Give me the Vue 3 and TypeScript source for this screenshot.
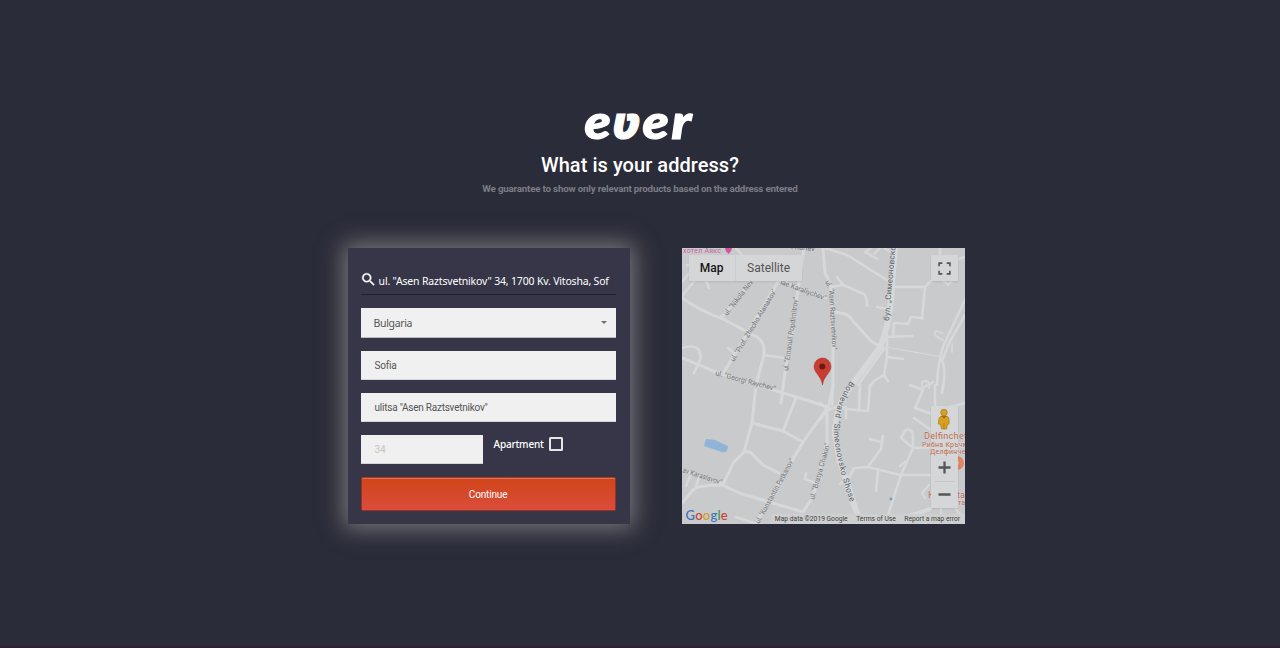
<script setup lang="ts">
import { ref } from 'vue'

const search = ref('ul. "Asen Raztsvetnikov" 34, 1700 Kv. Vitosha, Sof')
const country = ref('Bulgaria')
const city = ref('Sofia')
const street = ref('ulitsa "Asen Raztsvetnikov"')
const house = ref('34')

interface Road { d: string; w: number }
const roads: Road[] = [
  { d: 'M682 298Q700 311 723 319L757 337Q764 342 764 350V355L756 385 752 423 744 452 733 463 723 485', w: 3 },
  { d: 'M764 355L784 358M728 348L734 353M721 318L751 282M736 248L742 255', w: 2.6 },
  { d: 'M682 358L716 372 756 385 790 395 828 407', w: 3 },
  { d: 'M682 348Q692 345 697 348Q702 353 700 360L694 373', w: 2.6 },
  { d: 'M724 372L778 282M781 403L785 372 798 290 804 248', w: 3 },
  { d: 'M779 280L826 298M682 296L699 275M706 280L709 288M682 282L690 272M687 265L693 267', w: 2.6 },
  { d: 'M823 248L825 273Q831 283 831 292L833 347V385L828 410', w: 3 },
  { d: 'M825 248L847 255 890 282', w: 2.6 },
  { d: 'M837 277L843 285 864 294Q867 296 867 306M831 287L843 285', w: 2.6 },
  { d: 'M835 312L845 314Q849 315 853 321L872 342 882 347', w: 3 },
  { d: 'M894 287H925L936 276M940 248V262M965 257L955 260M925 287L922 319', w: 2.6 },
  { d: 'M922 318L911 317 908 324 894 323 893 337M885 337L912 336M877 307L888 309', w: 2.6 },
  { d: 'M887 335V357L884 375 888 381M887 357L903 359M884 375L874 381 870 386M884 349L858 385', w: 2.6 },
  { d: 'M880 346L942 357', w: 1.2 },
  { d: 'M965 300L947 338Q938 355 937 385M965 315L949 343 942 361Q946 366 943 389', w: 2.6 },
  { d: 'M943 340L936 336Q933 335 936 331L943 333M952 344V352M922 386Q920 381 926 381Q931 382 929 388', w: 1.8 },
  { d: 'M871 248L865 252 877 259M874 254L880 248M884 248L891 252M940 278L948 285 953 280', w: 2.2 },
  { d: 'M752 423L783 431 803 442M796 398L783 431', w: 3 },
  { d: 'M828 407L803 442 756 523', w: 3 },
  { d: 'M744 452H750L763 465 779 473', w: 3 },
  { d: 'M682 503L693 490Q698 485 723 485L739 493 803 512 813 497 827 443V408', w: 3 },
  { d: 'M682 470L721 483M686 486L690 476M696 486L699 478M736 517L754 523M806 473L805 479 815 483', w: 2.6 },
  { d: 'M820 403L828 410 820 420M828 410L838 406 846 409 868 411 870 385M846 407V418M860 385L859 410M833 385L832 405', w: 2.6 },
  { d: 'M910 385L923 390 915 408 935 415M935 385V415M914 418L935 433M943 385L942 393M950 407L965 403M921 389L933 382', w: 2.6 },
  { d: 'M901 438L905 431Q910 427 913 434V448L901 475 887 518M901 438L913 448 965 446', w: 2.6 },
  { d: 'M868 467L881 449 883 436M870 439L881 442M868 467L900 475H935M868 467L854 468 849 478 840 484M878 472L876 491M900 466L905 462', w: 2.6 },
  { d: 'M925 498L922 493 929 485M941 508V520M955 508L963 518', w: 2.2 },
  { d: 'M900 519L930 509', w: 4 },
  { d: 'M895 248L892 283Q891 322 880 347L852 385Q835 405 835 435L840 462 853 502 861 524', w: 6 },
]

interface Label { t: string; x: number; y: number; a: number; l: number }
const streets: Label[] = [
  { t: 'ul. "Nikola Nev', x: 727, y: 316, a: -52, l: 43 },
  { t: 'ul. "Prof. Zhecho Atanasov"', x: 734, y: 362, a: -59, l: 83 },
  { t: 'ul. "Emanuil Popdimitrov"', x: 788, y: 371, a: -82, l: 74 },
  { t: 'lae Karaliychev"', x: 780, y: 284, a: 20, l: 48 },
  { t: 'ul. "Georgi Raychev"', x: 715, y: 375, a: 15, l: 62 },
  { t: 'ul.', x: 825, y: 282, a: 60, l: 7 },
  { t: '"Asen Raztsvetnikov"', x: 829, y: 289, a: 87, l: 61 },
  { t: 'ul. "Konstantin Petkanov"', x: 759, y: 524, a: -61, l: 73 },
  { t: 'ul. "Bratya Chakin"', x: 814, y: 500, a: -74, l: 58 },
  { t: 'av Karaslavov"', x: 682, y: 472, a: 18, l: 41 },
  { t: 'i Kunev"', x: 791, y: 249, a: 5, l: 26 },
]

const google = [
  { c: 'G', k: 'blue' }, { c: 'o', k: 'red' }, { c: 'o', k: 'yellow' },
  { c: 'g', k: 'blue' }, { c: 'l', k: 'green' }, { c: 'e', k: 'red' },
]
</script>

<template>
  <main class="page">
    <header class="intro">
      <svg class="logo" viewBox="0 0 114 44" role="img" aria-label="ever">
        <text transform="translate(1.500 33.500) scale(1.140 1)">e</text>
        <text class="vee" transform="translate(29 33.500) scale(.96 1)">ʋ</text>
        <text transform="translate(59.500 33.500) scale(1.140 1)">e</text>
        <text transform="translate(88.500 33.500) scale(1.180 1)">r</text>
      </svg>
      <h1>What is your address?</h1>
      <p>We guarantee to show only relevant products based on the address entered</p>
    </header>

    <div class="content">
      <form class="card" @submit.prevent>
        <label class="search">
          <svg viewBox="0 0 24 24"><path d="M15.5 14h-.79l-.28-.27A6.47 6.47 0 0 0 16 9.5 6.5 6.5 0 1 0 9.5 16c1.61 0 3.09-.59 4.23-1.57l.27.28v.79l5 4.99L20.49 19l-4.99-5zm-6 0C7.01 14 5 11.99 5 9.5S7.01 5 9.5 5 14 7.01 14 9.5 11.99 14 9.5 14z" /></svg>
          <span>{{ search }}</span>
        </label>
        <div class="field select"><span>{{ country }}</span><i class="caret"></i></div>
        <div class="field city">{{ city }}</div>
        <div class="field street">{{ street }}</div>
        <div class="row">
          <div class="field house">{{ house }}</div>
          <label class="apartment"><span>Apartment</span><i class="box"></i></label>
        </div>
        <button type="submit">Continue</button>
      </form>

      <section class="map">
        <svg class="canvas" viewBox="682 248 283 276">
          <g class="roads">
            <path v-for="(r, i) in roads" :key="i" :d="r.d" :stroke-width="r.w" />
          </g>
          <path class="water" d="M706 439L715 440 728 446 727 451Q725 453 722 452L704 446Z" />
          <ellipse class="water" cx="921" cy="524" rx="5" ry="2.5" />
          <g class="streets">
            <text v-for="s in streets" :key="s.t" :textLength="s.l" lengthAdjust="spacingAndGlyphs"
              :transform="`translate(${s.x} ${s.y}) rotate(${s.a})`">{{ s.t }}</text>
          </g>
          <path id="boulevard" d="M850.500 381Q834 403 834 433Q836 463 853 510" fill="none" />
          <text class="major"><textPath href="#boulevard" textLength="127">Boulevard "Simeonovsko Shose</textPath></text>
          <text class="major" transform="translate(889 321) rotate(-85)" textLength="75">бул. „Симеоновско</text>
          <text class="hotel" x="683" y="253" textLength="38">хотел Аякс</text>
          <path class="hotelpin" d="M725 248H732Q732 251 728.500 254Q725 251 725 248Z" />
          <circle class="poi-dot" cx="957" cy="463" r="7" />
          <circle class="poi-hole" cx="955" cy="463" r="3.500" />
          <circle class="stop" cx="891" cy="499" r="1.400" />
          <g class="pin">
            <path d="M822.500 385C821.500 376 814 373 814 366.500A8.500 8.500 0 0 1 831 366.500C831 373 823.500 376 822.500 385Z" />
            <circle cx="822.300" cy="366.500" r="3" />
          </g>
          <text class="poi" x="928" y="498">К</text>
          <text class="poi" x="957" y="498">ta</text>
          <text class="poi small" x="958" y="505">та</text>
        </svg>

        <div class="types"><b>Map</b><span>Satellite</span></div>
        <div class="full"><svg viewBox="0 0 12 12"><path d="M1 4V1H4M8 1H11V4M11 8V11H8M4 11H1V8" /></svg></div>
        <div class="tools"></div>
        <svg class="overlay" viewBox="682 248 283 276">
          <text class="poi" x="924" y="439" textLength="43">Delfinchet</text>
          <text class="poi small" x="922" y="446.500" textLength="46">Рибна Кръчм</text>
          <text class="poi small" x="930" y="453.500" textLength="39">Делфинчет</text>
          <g class="pegman">
            <circle cx="944" cy="412.500" r="3.300" />
            <path d="M940.500 416.500H947.500Q949.500 417 949 424L947.500 424.500 946.500 429H941.500L940.500 424.500 938.500 424Q938.500 417 940.500 416.500Z" />
            <path class="collar" d="M941.500 416L944 418.500 946.500 416Z" />
            <path class="leg" d="M944 423V429" />
          </g>
          <path class="divider" d="M935 481.500H954" />
          <path class="sign" d="M938.500 467.500H950.500M944.500 461.500V473.500M938.500 494.500H950.500" />
        </svg>
        <div class="google"><span v-for="(g, i) in google" :key="i" :class="g.k">{{ g.c }}</span></div>
        <div class="credits"><span>Map data ©2019 Google</span><span>Terms of Use</span><span>Report a map error</span></div>
      </section>
    </div>
  </main>
</template>

<style>
body { background: #2b2c39; }
</style>

<style scoped>
.page {
  box-sizing: border-box;
  height: 648px;
  padding-top: 105px;
  overflow: hidden;
  background: #2b2c39;
  border-bottom: 2px solid #29242f;
  font-family: Roboto, "Liberation Sans", sans-serif;
  color: #fff;
}
.intro { display: flex; flex-direction: column; align-items: center; height: 143px; }
.logo { width: 114px; height: 44px; flex: none; overflow: visible; }
.logo text { font: italic 900 47px Lato, sans-serif; fill: #fff; stroke: #fff; stroke-width: 1.2; }
.logo .vee { font-family: "Noto Sans", sans-serif; font-size: 44px; }
h1 { margin: 1px 0 0; font-size: 20px; line-height: 30px; font-weight: 500; letter-spacing: 0.05px; }
p { margin: 2px 0 0; font-size: 9.8px; line-height: 14px; font-weight: 700; letter-spacing: -.21px; color: #7c7c85; white-space: nowrap; }
.content { display: flex; gap: 52px; padding-left: 347.6px; }
.card {
  box-sizing: border-box;
  width: 282px;
  height: 276px;
  padding: 18px 14px 0 13px;
  background: #363648;
  box-shadow: 0 0 22px 4px rgba(170, 166, 166, .62);
}
.search {
  box-sizing: border-box;
  display: flex;
  align-items: center;
  height: 29px;
  margin-bottom: 13px;
  border-bottom: 1px solid #20212b;
  font: 10.5px "Noto Sans", sans-serif;
  letter-spacing: -.18px;
  white-space: nowrap;
}
.search svg { width: 17px; height: 17px; flex: none; margin: -2px 2px 0 -1px; fill: #fff; stroke: #fff; stroke-width: .5; }
.search span { margin-top: 2px; }
.field {
  box-sizing: border-box;
  display: flex;
  align-items: center;
  height: 29px;
  margin-bottom: 13px;
  padding: 0 13px 0 14px;
  background: #f0f0f0;
  border-bottom: 1px solid #d4d5d9;
  color: #555;
  font-size: 10px;
  letter-spacing: -.24px;
}
.select { justify-content: space-between; height: 30px; padding: 0 9px 0 13px; font: 10.5px "Noto Sans", sans-serif; letter-spacing: -.35px; border-color: #b9bac2; }
.caret { border: 3.5px solid transparent; border-top-color: #707070; border-bottom: 0; }
.row { display: flex; gap: 11px; }
.house { width: 122px; color: #c5c5c5; }
.apartment { display: flex; align-items: center; gap: 5px; height: 17px; font: 500 10px "Noto Sans", sans-serif; letter-spacing: -.2px; }
.box { box-sizing: border-box; width: 14px; height: 14px; border: 2px solid #e6e6ea; border-radius: 1.500px; }
button {
  box-sizing: border-box;
  display: block;
  width: 255px;
  height: 34px;
  margin: 0;
  border: 1px solid #963324;
  border-top-color: #a63b20;
  border-radius: 2px;
  background: linear-gradient(#d14519, #db4c3b);
  box-shadow: inset 0 1px 0 rgba(255, 255, 255, .25);
  color: #fff;
  font: 10px Roboto, sans-serif;
  letter-spacing: -.15px;
}
.map { position: relative; width: 283px; height: 276px; overflow: hidden; background: #c8cacc; }
.canvas, .overlay { position: absolute; inset: 0; width: 283px; height: 276px; }
.roads path { fill: none; stroke: #d7d8d9; stroke-linecap: round; stroke-linejoin: round; }
.water { fill: #8fb4d5; }
.streets text { font: 7px Roboto, sans-serif; fill: #727476; }
.major { font: 8px Roboto, sans-serif; fill: #58626a; }
.hotel { font: 7px Roboto, sans-serif; fill: #cf62a2; }
.hotelpin { fill: #d552a0; }
.poi { font: 9px Roboto, sans-serif; fill: #bd6b52; stroke: #d8d8d8; stroke-width: 1px; paint-order: stroke; }
.small { font-size: 7px; }
.poi-dot { fill: #df8661; }
.poi-hole { fill: #d8d8d8; }
.stop { fill: #6c9cc4; }
.pin path { fill: #c83d32; stroke: #a93128; stroke-width: .5; }
.pin circle { fill: #691a18; }
.types, .full, .tools { position: absolute; background: #d5d6d7; box-shadow: 0 1px 2px rgba(0, 0, 0, .1); }
.types { left: 7px; top: 7px; display: flex; height: 26px; line-height: 26px; font-size: 12px; color: #555; }
.types b { width: 46px; text-align: center; font-weight: 500; color: #151515; border-right: 1px solid #cbcccd; }
.types span { width: 66px; text-align: center; }
.full { left: 249px; top: 7px; width: 27px; height: 26px; display: grid; place-items: center; }
.full svg { width: 13px; height: 13px; fill: none; stroke: #555; stroke-width: 1.500; }
.tools { left: 249px; top: 158px; width: 27px; height: 102px; }
.pegman { fill: #d8a020; stroke: #a27213; stroke-width: .6; }
.pegman .collar { fill: #b5601a; }
.pegman .leg { fill: none; }
.divider { stroke: #c4c5c6; }
.sign { stroke: #555; stroke-width: 2.300; }
.google { position: absolute; left: 4px; top: 259px; font: 500 13px/17px Lato, sans-serif; letter-spacing: .2px; }
.blue { color: #3c70c0; }
.red { color: #cf4035; }
.yellow { color: #d69e19; }
.green { color: #35964c; }
.credits { position: absolute; right: 0; bottom: -1px; display: flex; gap: 8.500px; padding: 0 4.500px 0 4px; height: 11px; font-size: 6.700px; line-height: 11px; color: #3e3e3e; white-space: nowrap; background: #cecfd0; }
</style>
